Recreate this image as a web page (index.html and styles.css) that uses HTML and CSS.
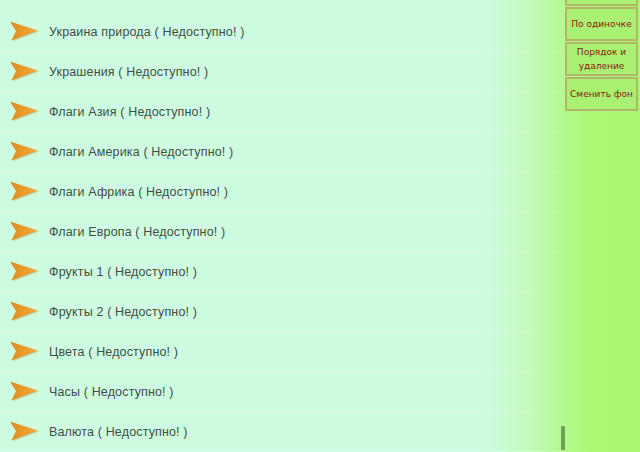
FILE: index.html
```html
<!DOCTYPE html>
<html lang="ru">
<head>
<meta charset="utf-8">
<link rel="stylesheet" href="styles.css">
</head>
<body>
<div class="page">
  <ul class="list">
    <li class="row"><svg class="arrow" viewBox="0 0 30 20"><defs><linearGradient id="g" x1="0" x2="1" y1="0" y2="0"><stop offset="0" stop-color="#e08c1c"/><stop offset="1" stop-color="#eeae3c"/></linearGradient></defs><path d="M1 0.5 L29 9.5 L2.5 19.5 L7 10 Z" fill="url(#g)"/></svg><span class="label">Украина природа ( Недоступно! )</span></li>
    <li class="row"><svg class="arrow" viewBox="0 0 30 20"><path d="M1 0.5 L29 9.5 L2.5 19.5 L7 10 Z" fill="url(#g)"/></svg><span class="label">Украшения ( Недоступно! )</span></li>
    <li class="row"><svg class="arrow" viewBox="0 0 30 20"><path d="M1 0.5 L29 9.5 L2.5 19.5 L7 10 Z" fill="url(#g)"/></svg><span class="label">Флаги Азия ( Недоступно! )</span></li>
    <li class="row"><svg class="arrow" viewBox="0 0 30 20"><path d="M1 0.5 L29 9.5 L2.5 19.5 L7 10 Z" fill="url(#g)"/></svg><span class="label">Флаги Америка ( Недоступно! )</span></li>
    <li class="row"><svg class="arrow" viewBox="0 0 30 20"><path d="M1 0.5 L29 9.5 L2.5 19.5 L7 10 Z" fill="url(#g)"/></svg><span class="label">Флаги Африка ( Недоступно! )</span></li>
    <li class="row"><svg class="arrow" viewBox="0 0 30 20"><path d="M1 0.5 L29 9.5 L2.5 19.5 L7 10 Z" fill="url(#g)"/></svg><span class="label">Флаги Европа ( Недоступно! )</span></li>
    <li class="row"><svg class="arrow" viewBox="0 0 30 20"><path d="M1 0.5 L29 9.5 L2.5 19.5 L7 10 Z" fill="url(#g)"/></svg><span class="label">Фрукты 1 ( Недоступно! )</span></li>
    <li class="row"><svg class="arrow" viewBox="0 0 30 20"><path d="M1 0.5 L29 9.5 L2.5 19.5 L7 10 Z" fill="url(#g)"/></svg><span class="label">Фрукты 2 ( Недоступно! )</span></li>
    <li class="row"><svg class="arrow" viewBox="0 0 30 20"><path d="M1 0.5 L29 9.5 L2.5 19.5 L7 10 Z" fill="url(#g)"/></svg><span class="label">Цвета ( Недоступно! )</span></li>
    <li class="row"><svg class="arrow" viewBox="0 0 30 20"><path d="M1 0.5 L29 9.5 L2.5 19.5 L7 10 Z" fill="url(#g)"/></svg><span class="label">Часы ( Недоступно! )</span></li>
    <li class="row"><svg class="arrow" viewBox="0 0 30 20"><path d="M1 0.5 L29 9.5 L2.5 19.5 L7 10 Z" fill="url(#g)"/></svg><span class="label">Валюта ( Недоступно! )</span></li>
  </ul>
  <div class="scrollbar"><div class="thumb"></div></div>
  <div class="side">
    <div class="btn btn-cut"></div>
    <div class="btn">По одиночке</div>
    <div class="btn">Порядок и<br>удаление</div>
    <div class="btn">Сменить фон</div>
  </div>
</div>
</body>
</html>
```
FILE: styles.css
```css
html, body {
  margin: 0;
  padding: 0;
  height: 100%;
  overflow: hidden;
}
body {
  background: linear-gradient(to right, #cdfce1 0, #cdfce1 485px, #c3fabb 530px, #b4f98c 565px, #abf874 595px, #a9f86e 640px);
  font-family: "Liberation Sans", Arial, sans-serif;
}
.page {
  display: flex;
  height: 452px;
}
.list {
  list-style: none;
  margin: 0;
  padding: 12px 0 0 0;
  width: 561px;
  flex: none;
}
.row {
  height: 39px;
  display: flex;
  align-items: center;
  border-bottom: 1px solid rgba(255, 255, 255, 0.22);
}
.arrow {
  width: 30px;
  height: 20px;
  margin-left: 9px;
  margin-top: -2px;
  filter: drop-shadow(1px 1px 0.5px rgba(150, 120, 60, 0.3));
}
.label {
  margin-left: 10px;
  font-size: 12.5px;
  color: #434d48;
  letter-spacing: 0.15px;
}
.scrollbar {
  width: 4px;
  flex: none;
  display: flex;
  flex-direction: column;
  justify-content: flex-end;
}
.thumb {
  height: 24px;
  margin-bottom: 2px;
  background: #6f9e58;
  border-radius: 1px;
}
.side {
  width: 75px;
  flex: none;
  display: flex;
  flex-direction: column;
  gap: 1px;
  margin-top: -28px;
}
.btn {
  box-sizing: border-box;
  height: 34px;
  border: 2px solid #b3b56a;
  background: #aaf072;
  color: #8a1a0a;
  font-family: "DejaVu Sans", sans-serif;
  font-size: 9px;
  text-align: center;
  display: flex;
  align-items: center;
  justify-content: center;
  line-height: 14px;
  width: 73px;
}
```
